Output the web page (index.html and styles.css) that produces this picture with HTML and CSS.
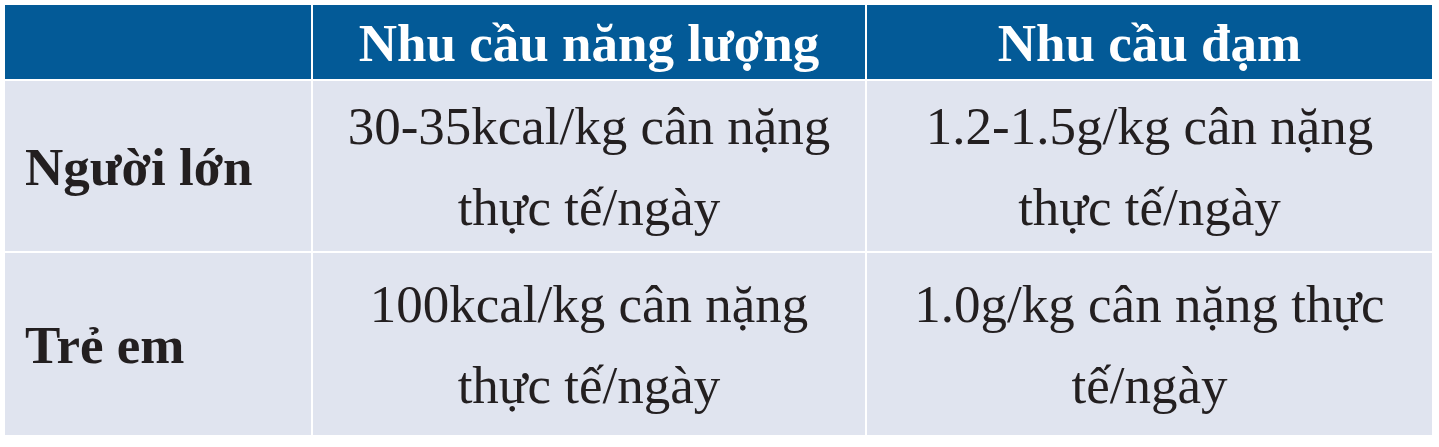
FILE: index.html
```html
<!DOCTYPE html>
<html lang="vi">
<head>
<meta charset="utf-8">
<title>Nhu cầu năng lượng và đạm</title>
<link rel="stylesheet" href="styles.css">
</head>
<body>
<div class="table" role="table">
  <div class="cell head corner" role="columnheader"></div>
  <div class="cell head" role="columnheader">Nhu cầu năng lượng</div>
  <div class="cell head" role="columnheader">Nhu cầu đạm</div>

  <div class="cell label" role="rowheader">Người lớn</div>
  <div class="cell value" role="cell">30-35kcal/kg cân nặng<br>thực tế/ngày</div>
  <div class="cell value" role="cell">1.2-1.5g/kg cân nặng<br>thực tế/ngày</div>

  <div class="cell label" role="rowheader">Trẻ em</div>
  <div class="cell value" role="cell">100kcal/kg cân nặng<br>thực tế/ngày</div>
  <div class="cell value" role="cell">1.0g/kg cân nặng thực<br>tế/ngày</div>
</div>
</body>
</html>
```

FILE: styles.css
```css
html, body {
  margin: 0;
  padding: 0;
  background: #ffffff;
}

.table {
  display: grid;
  grid-template-columns: 306px 552px 565px;
  grid-template-rows: 74px 170px 182px;
  gap: 2px;
  padding: 5px;
  width: max-content;
  font-family: "Liberation Serif", "Times New Roman", serif;
  font-size: 53px;
  line-height: 81px;
  color: #231f20;
}

.cell {
  display: flex;
  align-items: center;
  justify-content: center;
  text-align: center;
  background: #e0e4ef;
}

.head {
  background: #035a97;
  color: #ffffff;
  font-weight: bold;
  padding-top: 2px;
}

.label {
  justify-content: flex-start;
  text-align: left;
  padding-left: 20px;
  padding-top: 2px;
  font-weight: bold;
}

.value {
  padding-top: 2px;
}
```
